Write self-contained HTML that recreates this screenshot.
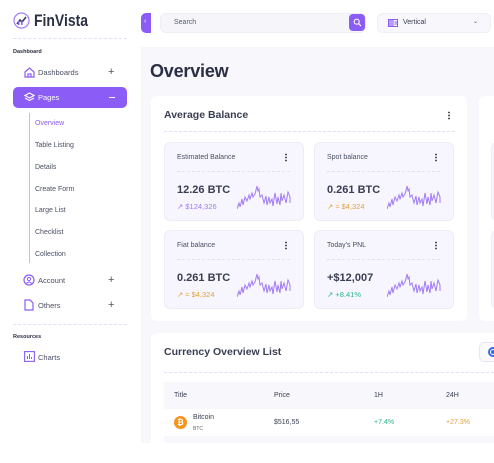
<!DOCTYPE html>
<html><head><meta charset="utf-8"><style>
*{box-sizing:border-box;margin:0;padding:0}
body{width:494px;height:443px;overflow:hidden;background:#fff;font-family:"Liberation Sans",sans-serif;color:#2b2f44;position:relative}
.a{position:absolute;white-space:nowrap}
.side{position:absolute;left:0;top:0;width:141px;height:443px;background:#fff}
.main{position:absolute;left:141px;top:47px;width:353px;height:396px;background:#f7f7fc}
.nav{font-size:7.5px;color:#4a4f63}
.sub{font-size:7px;color:#4a4f63;left:35px}
.dash{position:absolute;border-top:1px dashed #e2e1f3;height:0}
.card{position:absolute;background:#fff;border-radius:6px}
.sc{position:absolute;background:#f7f6fe;border:1px solid #eeedf7;border-radius:6px;width:140px;height:79px}
.sc .l{position:absolute;left:12px;top:11px;font-size:7px;color:#4a4f63}
.sc .d{position:absolute;right:16px;top:10px;width:2px;height:9px;background:radial-gradient(circle,#555 0.9px,transparent 1px) 0 0/2px 3px}
.sc .dl{position:absolute;left:12px;right:13px;top:28px;border-top:1px dashed #e2e1f3}
.sc .v{position:absolute;left:12px;top:41px;font-size:11px;font-weight:bold;color:#3a3e52}
.sc .s{position:absolute;left:12px;top:59px;font-size:7.5px}
.sc svg{position:absolute;left:72px;top:40px}
.dots{position:absolute;width:2px;height:9px;background:radial-gradient(circle,#555 0.9px,transparent 1px) 0 0/2px 3px}
</style></head><body>
<div class="side">
<svg class="a" style="left:13px;top:12px" width="17" height="17" viewBox="0 0 17 17"><circle cx="8.5" cy="8.5" r="7.5" fill="none" stroke="#a27bf4" stroke-width="1.2"/><path d="M4 12 L7 8 L9 10 L13 5" stroke="#3a3e52" stroke-width="1.6" fill="none"/><rect x="5" y="9" width="1.5" height="4" fill="#8b5cf6"/><rect x="8" y="8" width="1.5" height="5" fill="#8b5cf6"/></svg>
<div class="a" style="left:34px;top:11px;font-size:17px;font-weight:bold;color:#2b2f44;transform:scaleX(0.82);transform-origin:0 0">FinVista</div>
<div class="dash" style="left:13px;top:38px;width:114px"></div>
<div class="a" style="left:13px;top:49px;font-size:5.5px;font-weight:bold;color:#2b2f44">Dashboard</div>
<svg class="a" style="left:24px;top:67px" width="11" height="11" viewBox="0 0 11 11"><path d="M1 5 L5.5 1 L10 5 V10 H1Z M4 10 V7 H7 V10" fill="none" stroke="#8b5cf6" stroke-width="1.2"/></svg>
<div class="a nav" style="left:38px;top:68px">Dashboards</div>
<div class="a" style="left:108px;top:66px;font-size:11px;color:#555">+</div>
<div class="a" style="left:13px;top:87px;width:114px;height:21px;background:#8b5cf6;border-radius:5px"></div>
<svg class="a" style="left:24px;top:92px" width="11" height="11" viewBox="0 0 11 11"><path d="M5.5 1 L10 3.5 L5.5 6 L1 3.5Z M1 6 L5.5 8.5 L10 6" fill="none" stroke="#fff" stroke-width="1.1"/></svg>
<div class="a nav" style="left:38px;top:93px;color:#fff">Pages</div>
<div class="a" style="left:109px;top:97px;width:6px;height:1.2px;background:#fff"></div>
<div class="a" style="left:29px;top:113px;width:1px;height:150px;background:#c8b6fb"></div>
<div class="a sub" style="top:120px;color:#8b5cf6">Overview</div>
<div class="a sub" style="top:142px">Table Listing</div>
<div class="a sub" style="top:164px">Details</div>
<div class="a sub" style="top:186px">Create Form</div>
<div class="a sub" style="top:207px">Large List</div>
<div class="a sub" style="top:229px">Checklist</div>
<div class="a sub" style="top:251px">Collection</div>
<svg class="a" style="left:23px;top:274px" width="12" height="12" viewBox="0 0 12 12"><circle cx="6" cy="6" r="5" fill="none" stroke="#8b5cf6" stroke-width="1.2"/><circle cx="6" cy="5" r="1.6" fill="none" stroke="#8b5cf6"/><path d="M3.5 9.5 Q6 6.5 8.5 9.5" fill="none" stroke="#8b5cf6"/></svg>
<div class="a nav" style="left:38px;top:276px">Account</div>
<div class="a" style="left:108px;top:274px;font-size:11px;color:#555">+</div>
<svg class="a" style="left:24px;top:299px" width="10" height="12" viewBox="0 0 10 12"><path d="M1 1 H6 L9 4 V11 H1Z" fill="none" stroke="#8b5cf6" stroke-width="1.2"/></svg>
<div class="a nav" style="left:38px;top:301px">Others</div>
<div class="a" style="left:108px;top:299px;font-size:11px;color:#555">+</div>
<div class="dash" style="left:13px;top:324px;width:114px"></div>
<div class="a" style="left:13px;top:334px;font-size:5.5px;font-weight:bold;color:#2b2f44">Resources</div>
<svg class="a" style="left:24px;top:351px" width="11" height="11" viewBox="0 0 11 11"><rect x="0.6" y="0.6" width="9.8" height="9.8" fill="none" stroke="#8b5cf6" stroke-width="1.1"/><path d="M3.5 8V5 M5.5 8V3 M7.5 8V6" stroke="#8b5cf6"/></svg>
<div class="a nav" style="left:38px;top:353px">Charts</div>
</div>
<div class="a" style="left:141px;top:13px;width:10px;height:20px;background:#8b5cf6;border-radius:5px 0 0 5px"></div>
<div class="a" style="left:144px;top:18px;font-size:7px;color:#fff">‹</div>
<div class="a" style="left:160px;top:13px;width:206px;height:20px;background:#f5f5fa;border:1px solid #eeeef5;border-radius:6px"></div>
<div class="a" style="left:174px;top:19px;font-size:7px;color:#555a6e">Search</div>
<div class="a" style="left:349px;top:14px;width:16px;height:17px;background:#8b5cf6;border-radius:4px"></div>
<svg class="a" style="left:353px;top:18px" width="9" height="9" viewBox="0 0 9 9"><circle cx="3.7" cy="3.7" r="2.5" fill="none" stroke="#fff" stroke-width="1.1"/><path d="M5.5 5.5 L8 8" stroke="#fff" stroke-width="1.2"/></svg>
<div class="a" style="left:377px;top:13px;width:114px;height:20px;background:#f7f7fc;border:1px solid #eeeef5;border-radius:6px"></div>
<svg class="a" style="left:388px;top:19px" width="10" height="8" viewBox="0 0 10 8"><rect x="0.5" y="0.5" width="9" height="7" fill="none" stroke="#8b5cf6"/><path d="M5 0.5V7.5 M6.5 3H9 M6.5 5H9" stroke="#8b5cf6"/><rect x="1" y="1" width="4" height="6" fill="#b79cf8"/></svg>
<div class="a" style="left:403px;top:19px;font-size:7px;color:#3a3e52">Vertical</div>
<div class="a" style="left:473px;top:18px;font-size:6px;color:#555">⌄</div>
<div class="main"></div>
<div class="a" style="left:150px;top:61px;font-size:18px;font-weight:bold;color:#2b2f44;letter-spacing:-0.2px">Overview</div>
<div class="card" style="left:151px;top:96px;width:316px;height:225px"></div>
<div class="card" style="left:479px;top:96px;width:40px;height:225px"></div>
<div class="a" style="left:491px;top:142px;width:20px;height:79px;background:#f7f6fe;border:1px solid #eeedf7;border-radius:6px"></div>
<div class="a" style="left:491px;top:230px;width:20px;height:79px;background:#f7f6fe;border:1px solid #eeedf7;border-radius:6px"></div>
<div class="a" style="left:164px;top:109px;font-size:10.5px;font-weight:bold;color:#3a3e52">Average Balance</div>
<div class="dots" style="left:448px;top:111px"></div>
<div class="dash" style="left:164px;top:131px;width:291px"></div>
<svg width="0" height="0" style="position:absolute"><defs><polyline id="sp" points="0,26 2,20 3,24 5,16 6,22 8,14 10,18 12,12 13,16 15,10 16,14 18,11 20,3 21,8 22,6 23,14 25,12 27,20 29,13 30,22 32,14 33,20 35,16 36,23 38,10 40,21 41,14 43,22 44,10 45,18 47,12 49,20 51,9 53,14 53,20" fill="none" stroke="#a27bf4" stroke-width="1"/></defs></svg>
<div class="sc" style="left:164px;top:142px"><div class="l">Estimated Balance</div><div class="d"></div><div class="dl"></div><div class="v">12.26 BTC</div><div class="s" style="color:#a27bf4">↗ $124,326</div><svg width="55" height="28" viewBox="0 0 55 28"><use href="#sp"/></svg></div>
<div class="sc" style="left:314px;top:142px"><div class="l">Spot balance</div><div class="d"></div><div class="dl"></div><div class="v">0.261 BTC</div><div class="s" style="color:#e0a23c">↗ ≈ $4,324</div><svg width="55" height="28" viewBox="0 0 55 28"><use href="#sp"/></svg></div>
<div class="sc" style="left:164px;top:230px"><div class="l">Fiat balance</div><div class="d"></div><div class="dl"></div><div class="v">0.261 BTC</div><div class="s" style="color:#e0a23c">↗ ≈ $4,324</div><svg width="55" height="28" viewBox="0 0 55 28"><use href="#sp"/></svg></div>
<div class="sc" style="left:314px;top:230px"><div class="l">Today's PNL</div><div class="d"></div><div class="dl"></div><div class="v">+$12,007</div><div class="s" style="color:#2fb58a">↗ +8.41%</div><svg width="55" height="28" viewBox="0 0 55 28"><use href="#sp"/></svg></div>
<div class="card" style="left:151px;top:333px;width:360px;height:130px"></div>
<div class="a" style="left:164px;top:346px;font-size:10.5px;font-weight:bold;color:#3a3e52">Currency Overview List</div>
<div class="a" style="left:479px;top:342px;width:30px;height:20px;border:1px solid #e6e6ef;border-radius:5px;background:#fafafe"></div>
<div class="a" style="left:488px;top:347px;width:10px;height:10px;border-radius:50%;background:#2f6fe0"></div>
<div class="a" style="left:490px;top:349px;width:6px;height:6px;border-radius:50%;border:1px solid #fff"></div>
<div class="dash" style="left:164px;top:372px;width:330px"></div>
<div class="a" style="left:164px;top:382px;width:330px;height:27px;background:#f7f7fc"></div>
<div class="a" style="left:174px;top:392px;font-size:7px;color:#3a3e52">Title</div>
<div class="a" style="left:274px;top:392px;font-size:7px;color:#3a3e52">Price</div>
<div class="a" style="left:374px;top:392px;font-size:7px;color:#3a3e52">1H</div>
<div class="a" style="left:446px;top:392px;font-size:7px;color:#3a3e52">24H</div>
<div class="a" style="left:174px;top:416px;width:13px;height:13px;border-radius:50%;background:#f7931a;color:#fff;font-size:8px;font-weight:bold;text-align:center;line-height:13px">₿</div>
<div class="a" style="left:193px;top:414px;font-size:7px;color:#3a3e52">Bitcoin</div>
<div class="a" style="left:193px;top:426px;font-size:5px;color:#666">BTC</div>
<div class="a" style="left:274px;top:419px;font-size:7px;color:#3a3e52">$516,55</div>
<div class="a" style="left:374px;top:419px;font-size:7px;color:#2fb58a">+7.4%</div>
<div class="a" style="left:446px;top:419px;font-size:7px;color:#e0a23c">+27.3%</div>
<div class="a" style="left:164px;top:436px;width:330px;height:7px;background:#f7f7fc"></div>
</body></html>
